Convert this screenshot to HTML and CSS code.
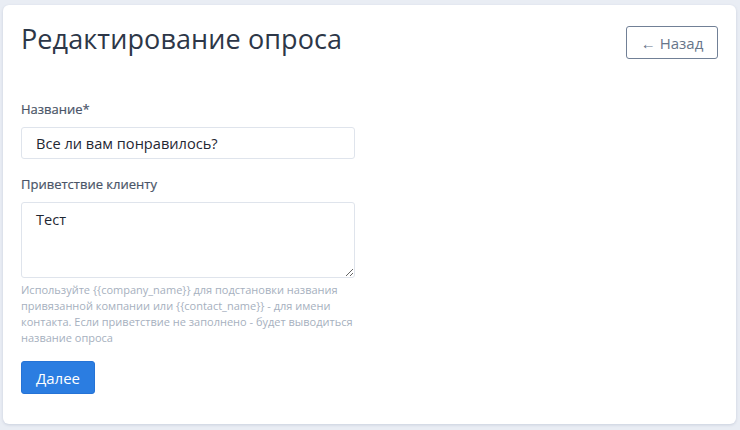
FILE: index.html
```html
<!DOCTYPE html>
<html lang="ru">
<head>
<meta charset="utf-8">
<link rel="stylesheet" href="styles.css">
</head>
<body>
<div class="card">
  <div class="header">
    <h1 class="title">Редактирование опроса</h1>
    <button class="back-btn">← Назад</button>
  </div>
  <form class="form">
    <div class="field">
      <label class="label">Название*</label>
      <input class="input" type="text" value="Все ли вам понравилось?">
    </div>
    <div class="field field-last">
      <label class="label">Приветствие клиенту</label>
      <textarea class="textarea">Тест</textarea>
      <p class="help">Используйте {{company_name}} для подстановки названия привязанной компании или {{contact_name}} - для имени контакта. Если приветствие не заполнено - будет выводиться название опроса</p>
    </div>
    <button class="submit" type="button">Далее</button>
  </form>
</div>
</body>
</html>
```
FILE: styles.css
```css
* { box-sizing: border-box; }
html, body { height: 100%; }
body {
  margin: 0;
  padding: 5px 4px 6px 3px;
  background: #e9edf4;
  font-family: "Open Sans", "Noto Sans", sans-serif;
}
.card {
  background: #fff;
  border-radius: 6px;
  box-shadow: 0 1px 3px rgba(60, 80, 120, 0.18);
  height: 419px;
  padding: 14px 18px 0 18px;
}
.header {
  display: flex;
  justify-content: space-between;
  align-items: flex-start;
}
.title {
  margin: 0;
  font-size: 27px;
  font-weight: 400;
  color: #2d3748;
  line-height: 40px;
  letter-spacing: 0.1px;
}
.back-btn {
  margin-top: 7px;
  height: 33px;
  width: 92px;
  background: #fff;
  border: 1px solid #718096;
  border-radius: 3px;
  color: #66758a;
  font-family: inherit;
  font-size: 15px;
  padding: 0;
}
.form {
  margin-top: 41px;
  width: 334px;
}
.field {
  display: flex;
  flex-direction: column;
  margin-bottom: 16px;
}
.field-last { margin-bottom: 15px; }
.label {
  font-size: 13px;
  font-weight: 400;
  color: #4a5568;
  line-height: 18px;
  margin-bottom: 9px;
  -webkit-text-stroke: 0.2px #4a5568;
}
.input, .textarea {
  width: 334px;
  border: 1px solid #dfe4ec;
  border-radius: 3px;
  font-family: inherit;
  font-size: 14.6px;
  color: #1f2733;
  padding: 0 14px;
}
.input { height: 32px; }
.textarea {
  height: 76px;
  padding-top: 6px;
  resize: vertical;
  line-height: 20px;
}
.help {
  margin: 4px 0 0;
  font-size: 11px;
  line-height: 16px;
  color: #a6b0be;
}
.submit {
  width: 74px;
  height: 33px;
  background: #2b7de1;
  border: 1px solid #2573d6;
  border-radius: 3px;
  color: #fff;
  font-family: inherit;
  font-size: 15px;
  padding: 0;
}
```
